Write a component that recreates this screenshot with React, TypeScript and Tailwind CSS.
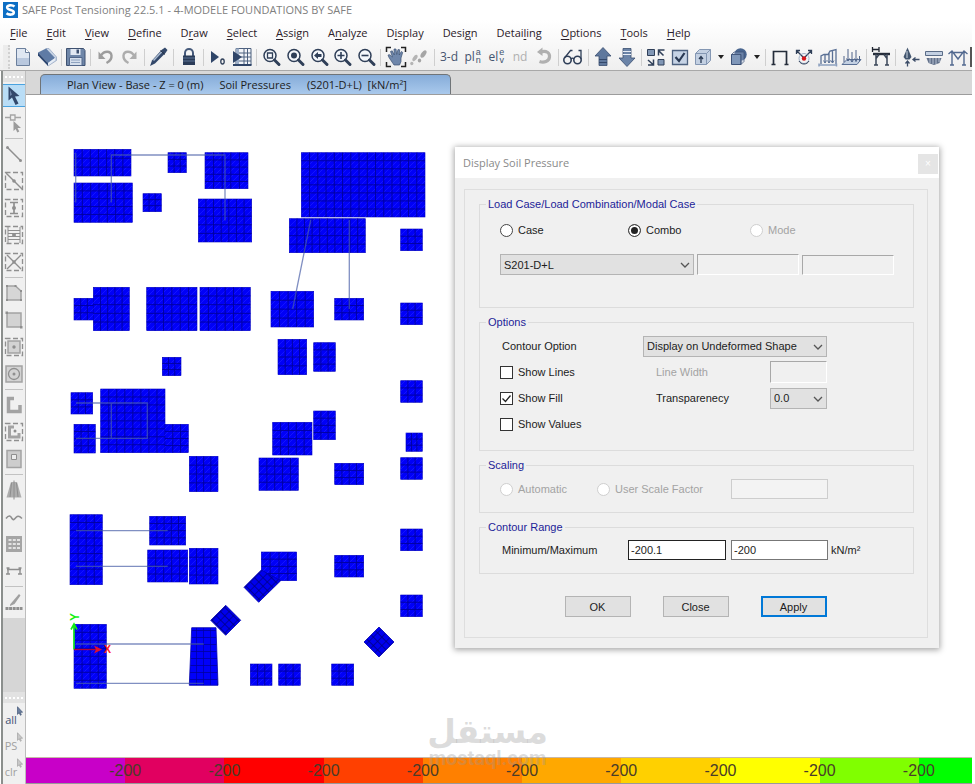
import React from 'react';

type Kids = { children?: React.ReactNode };

const NAVY = '#2f3f58';
const STEEL = '#8096b4';
const PALE = '#c3d0e2';
const GREY = '#8f8f8f';

function Glyph({ children }: Kids) {
  return (
    <svg viewBox="0 0 22 22" className="h-[22px] w-[22px] shrink-0" fill="none" aria-hidden="true">
      {children}
    </svg>
  );
}

function Magnifier({ children }: Kids) {
  return (
    <Glyph>
      <circle cx="10" cy="9.5" r="6" stroke={NAVY} strokeWidth="1.5" fill="#f4f7fb" />
      <path d="M14.5 14l4.500 4.500" stroke={NAVY} strokeWidth="3" strokeLinecap="round" />
      {children}
    </Glyph>
  );
}

type Tool = { label: string; icon: React.ReactNode } | 'sep' | 'drop';

const lettering = 'font-["Open_Sans",sans-serif] leading-none';

function StackedLabel({ lead, top, bottom }: { lead: string; top: string; bottom: string }) {
  return (
    <span className={`${lettering} flex items-center text-[12px] text-[#44546f]`}>
      {lead}
      <span className="ml-px flex flex-col font-['Liberation_Sans',sans-serif] text-[9px] leading-[9px]">
        <span className="h-[8px]">{top}</span>
        <span className="h-[10px]">{bottom}</span>
      </span>
    </span>
  );
}

const tools: Tool[] = [
  {
    label: 'New model',
    icon: (
      <Glyph>
        <path d="M4.500 2.500h9l4 4v13h-13z" fill="#dfe7f2" stroke="#6b7f9c" />
        <path d="M5 12h12v7H5z" fill="#b9c8de" />
        <path d="M13.500 2.500v4h4" fill="#fff" stroke="#6b7f9c" />
      </Glyph>
    ),
  },
  {
    label: 'Open',
    icon: (
      <Glyph>
        <path d="M10 2.500h3L20.500 11v3.500L12 20z" fill="#c9d5e6" stroke="#8fa2bf" strokeWidth=".7" />
        <path d="M2 6.500L10 2.500 19 12l-7 5z" fill="#5f7ba5" />
        <path d="M2 6.500l10 10.500v3L2 9.500z" fill="#2b4570" />
        <path d="M12 17l7-5v2.500l-7 5z" fill="#e6edf6" />
      </Glyph>
    ),
  },
  'sep',
  {
    label: 'Save',
    icon: (
      <Glyph>
        <path d="M1.500 2.500h17l1.500 2v15h-18.500z" fill="#6e86a8" stroke="#3e5170" />
        <path d="M5.500 3h10v6h-10z" fill="#e2e9f3" />
        <path d="M11.500 3.500h2.500v4h-2.500z" fill="#3e5170" />
        <path d="M4.500 11.500h12.500v8h-12.500z" fill="#d5dfec" stroke="#52678a" />
        <path d="M6 14h9M6 16.500h9" stroke="#8ea2bf" />
      </Glyph>
    ),
  },
  'sep',
  {
    label: 'Undo',
    icon: (
      <Glyph>
        <path d="M6 9.500c3-5 10-5 10.500 0 .3 3-2 6-5 7.500" stroke="#9d9d9d" strokeWidth="2.400" />
        <path d="M3.500 5.500v7.500h7z" fill="#9d9d9d" />
      </Glyph>
    ),
  },
  {
    label: 'Redo',
    icon: (
      <Glyph>
        <path d="M16 9.500c-3-5-10-5-10.500 0-.3 3 2 6 5 7.500" stroke="#adadad" strokeWidth="2.400" />
        <path d="M18.500 5.500v7.500h-7z" fill="#adadad" />
      </Glyph>
    ),
  },
  'sep',
  {
    label: 'Draw',
    icon: (
      <Glyph>
        <path d="M2 20l2-5.500L13.500 4l3.500-2.500 2.500 2.500L17.500 7 7 17.500z" fill="#33486a" />
        <path d="M5.500 14.500L14 5.500" stroke="#a9bad1" strokeWidth="1.500" />
        <path d="M12.500 4.500l4.500 4" stroke="#1e2b40" />
      </Glyph>
    ),
  },
  'sep',
  {
    label: 'Lock model',
    icon: (
      <Glyph>
        <path d="M7 10V7c0-5.500 8-5.500 8 0v3" stroke="#45597a" strokeWidth="2" />
        <path d="M5 9.500h12v9.500h-12z" fill="#2b3c58" />
        <path d="M5 12h12M5 15h12" stroke="#5d7294" />
      </Glyph>
    ),
  },
  'sep',
  {
    label: 'Run analysis',
    icon: (
      <Glyph>
        <path d="M4 5l8 6-8 6z" fill="#2f4568" />
        <ellipse cx="15.500" cy="15.500" rx="1.700" ry="2.500" stroke={NAVY} strokeWidth="1.300" />
      </Glyph>
    ),
  },
  {
    label: 'Mesh',
    icon: (
      <Glyph>
        <path d="M5 2.500h15v16.500H5z" fill="#f2f5f9" stroke="#4d607f" />
        <path d="M13 3v16M16.500 3v16M6 7h14M6 11h14M6 15h14" stroke="#4d607f" />
        <path d="M5 2.500h3v16.500H5z" fill="#9fb0c8" />
        <path d="M2 5l9 6-9 6z" fill="#2f4568" />
        <path d="M2 19h18.500" stroke="#2f4568" strokeWidth="2" />
      </Glyph>
    ),
  },
  'sep',
  { label: 'Rubber band zoom', icon: <Magnifier><path d="M7.500 7h5v5h-5z" stroke={NAVY} strokeWidth="1.300" /></Magnifier> },
  { label: 'Full view', icon: <Magnifier><circle cx="10" cy="9.500" r="3" fill={NAVY} /></Magnifier> },
  { label: 'Previous zoom', icon: <Magnifier><path d="M6 9.500l4-3.500v2h3.500v3H10v2z" fill={NAVY} /></Magnifier> },
  { label: 'Zoom in', icon: <Magnifier><path d="M10 6v7M6.500 9.500h7" stroke={NAVY} strokeWidth="1.600" /></Magnifier> },
  { label: 'Zoom out', icon: <Magnifier><path d="M6.500 9.500h7" stroke={NAVY} strokeWidth="1.600" /></Magnifier> },
  'sep',
  {
    label: 'Pan',
    icon: (
      <Glyph>
        <path d="M1.500 6V1.500H6M16 1.500h4.500V6M20.500 16v4.500H16M6 20.500H1.500V16" stroke="#222" strokeWidth="1.500" />
        <path d="M8 17.500L4 11.500 3 9l1.800-.3L7.500 11 5.500 5.500 7.200 4.800 9.300 9 9 3h2l.7 5.500L13 3.500l1.700.3L14.200 9 16.300 5.500l1.400.9L16 12v3.500L14.500 19H9z" fill="#6f87ab" stroke="#3c5172" strokeWidth=".7" />
      </Glyph>
    ),
  },
  {
    label: 'Walk',
    icon: (
      <Glyph>
        <ellipse cx="7" cy="12" rx="1.900" ry="3.600" transform="rotate(35 7 12)" fill="#b5b5b5" />
        <ellipse cx="3.800" cy="17.500" rx="1.600" ry="1.800" fill="#b5b5b5" />
        <ellipse cx="15.500" cy="8" rx="2.200" ry="4.200" transform="rotate(35 15.500 8)" fill="#a5a5a5" />
        <ellipse cx="11.500" cy="14.500" rx="1.700" ry="2" fill="#a5a5a5" />
      </Glyph>
    ),
  },
  'sep',
  { label: '3-d view', icon: <span className={`${lettering} text-[12px] text-[#44546f]`}>3-d</span> },
  { label: 'Plan view', icon: <StackedLabel lead="pl" top="a" bottom="n" /> },
  { label: 'Elevation view', icon: <StackedLabel lead="el" top="e" bottom="v" /> },
  { label: 'nd view', icon: <span className={`${lettering} text-[12px] text-[#b0b0b0]`}>nd</span> },
  {
    label: 'Rotate view',
    icon: (
      <Glyph>
        <path d="M7.500 6c6-2 9.500 1 9 5-.5 4.500-5.500 6-10 4.500" stroke="#b0b0b0" strokeWidth="3.200" />
        <path d="M9.500 1.500v8.500L4 6z" fill="#b0b0b0" />
      </Glyph>
    ),
  },
  'sep',
  {
    label: 'Perspective',
    icon: (
      <Glyph>
        <circle cx="5.500" cy="14" r="3.700" stroke={NAVY} strokeWidth="1.600" />
        <circle cx="15.500" cy="14" r="3.700" stroke={NAVY} strokeWidth="1.600" />
        <path d="M9 13c1-1.200 2-1.200 3 0M2.500 12L8.500 4.500h2M19 13V4.500h-2.500" stroke={NAVY} strokeWidth="1.300" />
      </Glyph>
    ),
  },
  'sep',
  {
    label: 'Move up',
    icon: (
      <Glyph>
        <path d="M11 1.500l8 8.500h-4v9.500H7V10H3z" fill="#5f789d" stroke="#3a4e70" strokeWidth=".8" />
        <path d="M7 13.500h8M7 16.500h8" stroke="#34486a" />
      </Glyph>
    ),
  },
  {
    label: 'Move down',
    icon: (
      <Glyph>
        <path d="M11 20.500L3 12h4V2.500h8V12h4z" fill="#6b84a8" stroke="#3a4e70" strokeWidth=".8" />
        <path d="M7 5.500h8M7 8.500h8" stroke="#e6ecf5" />
      </Glyph>
    ),
  },
  'sep',
  {
    label: 'Object shrink',
    icon: (
      <Glyph>
        <path d="M2.500 3.500h7v6h-7zM13 13.500h6v5.500h-6z" fill={STEEL} stroke={NAVY} />
        <path d="M3 19h5.500v-5.500M8 18.500l-5-4.500M19.500 4h-6v5.500M13.500 4.500l5 5" stroke={NAVY} strokeWidth="1.500" />
      </Glyph>
    ),
  },
  {
    label: 'Display options',
    icon: (
      <Glyph>
        <path d="M3.500 4.500h15v14h-15z" fill="#c6d3e5" stroke="#4d617f" strokeWidth="1.300" />
        <path d="M6.500 11l3.500 4 5.500-8" stroke="#2a3a54" strokeWidth="2.200" />
      </Glyph>
    ),
  },
  {
    label: 'Assignments',
    icon: (
      <Glyph>
        <path d="M3.500 7.500l4-4h11v11l-4 4h-11z" fill={PALE} stroke="#8497b3" />
        <path d="M3.500 7.500h11v11M14.500 7.500l4-4" stroke="#8497b3" />
        <path d="M9 17v-6M7 13L9 10.500l2 2.500" stroke="#2a3a54" strokeWidth="1.300" />
      </Glyph>
    ),
  },
  'drop',
  {
    label: 'Named views',
    icon: (
      <Glyph>
        <circle cx="12.500" cy="8.500" r="6.200" fill="#49658f" />
        <path d="M3.500 8.500h9.500v10h-9.500z" fill="#7f97b9" stroke="#3d5277" />
        <path d="M3.500 8.500L6 6h10v9.500l-3 3V8.500z" fill="#a5b8d3" fillOpacity=".35" stroke="#3d5277" strokeWidth=".7" />
      </Glyph>
    ),
  },
  'drop',
  'sep',
  {
    label: 'Undeformed shape',
    icon: (
      <Glyph>
        <path d="M4.500 18V5.500h13V18" stroke="#252d3a" strokeWidth="1.700" />
        <path d="M2.500 18.500h4M15.500 18.500h4" stroke="#252d3a" strokeWidth="1.500" />
      </Glyph>
    ),
  },
  {
    label: 'Joint reactions',
    icon: (
      <Glyph>
        <path d="M4 5l7 7 7-7M3.500 8V4.500H7M15 4.500h3.500V8" stroke={NAVY} strokeWidth="1.300" />
        <circle cx="11" cy="12.500" r="5" stroke="#9fb0c8" />
        <path d="M6 15c2 4 8 4 10 0" stroke={NAVY} />
        <circle cx="11" cy="12.500" r="2.200" fill="#d8171b" />
      </Glyph>
    ),
  },
  {
    label: 'Frame forces',
    icon: (
      <Glyph>
        <path d="M4 18V10l3-1.500h4L13 5l6-1.500V18M8 17V8.500M12 17V6.500M15.500 17V4.500" stroke="#5a7095" strokeWidth="1.300" />
        <path d="M6.500 14.500L8 17l1.500-2.500M10.500 14.500L12 17l1.500-2.500M14 14.500l1.500 2.500 1.500-2.500" stroke="#5a7095" />
        <path d="M1.500 19h18.500M2 17.500v3M19.500 17.500v3" stroke="#8ca0bf" strokeWidth="1.500" />
      </Glyph>
    ),
  },
  {
    label: 'Shell forces',
    icon: (
      <Glyph>
        <path d="M2 18.500l5-5h14l-4 5z" fill={PALE} stroke="#5a7095" />
        <path d="M4 10v6M8 3v12M12 6v10M16 4v12M19.500 10v5M6.500 12.500L8 15l1.500-2.500M10.500 13.500L12 16l1.500-2.500M14.500 12.500L16 15l1.500-2.500" stroke="#50658a" />
      </Glyph>
    ),
  },
  'sep',
  {
    label: 'Frame design',
    icon: (
      <Glyph>
        <path d="M2.500 1v5M9 1v5M2.500 3.500H9" stroke="#1f2530" strokeWidth="1.300" />
        <path d="M3 8h17" stroke="#252d3a" strokeWidth="2.400" />
        <path d="M6 8v11M17 8v11M4 19h4M15 19h4M6 12.500l3-4M17 12.500l-3-4" stroke="#3a4658" strokeWidth="1.500" />
      </Glyph>
    ),
  },
  'sep',
  {
    label: 'Soil',
    icon: (
      <Glyph>
        <path d="M7.500 1.500l4 9.500-2 2.500h-4l-2-2.500z" fill="#43566f" />
        <path d="M7 5v7" stroke="#cfd8e4" />
        <path d="M7.500 20.500v-5M5.500 17.500l2-2.500 2 2.500M19.500 13.500h-6.500M15.500 11.500l-2.500 2 2.500 2" stroke="#3c4d68" strokeWidth="1.300" />
      </Glyph>
    ),
  },
  {
    label: 'Strip forces',
    icon: (
      <Glyph>
        <path d="M2.500 5.500h17v4h-17z" fill={PALE} stroke="#5a6c87" />
        <path d="M3.500 12h15l-2 5-5.500 2-5.500-2z" fill="#62718a" />
        <path d="M7 12v5M10 12v6M13 12v6M16 12v4" stroke="#b8c3d4" />
      </Glyph>
    ),
  },
  {
    label: 'Tendon profile',
    icon: (
      <Glyph>
        <path d="M5 18.500V6M17 18.500V6M3 19h4M15 19h4M1.500 8L5 5l6 8 6-8 3.500 3M5 6.500h12" stroke="#536a90" strokeWidth="1.400" />
      </Glyph>
    ),
  },
];

const menus: [string, string, string][] = [
  ['', 'F', 'ile'],
  ['', 'E', 'dit'],
  ['', 'V', 'iew'],
  ['', 'D', 'efine'],
  ['D', 'r', 'aw'],
  ['', 'S', 'elect'],
  ['', 'A', 'ssign'],
  ['A', 'n', 'alyze'],
  ['D', 'i', 'splay'],
  ['Desi', 'g', 'n'],
  ['Detai', 'l', 'ing'],
  ['', 'O', 'ptions'],
  ['', 'T', 'ools'],
  ['', 'H', 'elp'],
];

function MenuBar() {
  return (
    <nav className="flex h-[24px] items-center gap-[19px] overflow-hidden bg-gradient-to-b from-white to-[#f8f8f8] pt-[2px] pl-[10px] text-[11px] text-[#2b2028]">
      {menus.map(([a, key, b]) => (
        <button key={a + key + b} type="button" className="whitespace-nowrap leading-[16px]">
          {a}
          <span className="underline underline-offset-2">{key}</span>
          {b}
        </button>
      ))}
    </nav>
  );
}

function Toolbar() {
  return (
    <div role="toolbar" className="flex h-[27px] items-center overflow-hidden border-b border-[#a8a8a8] bg-gradient-to-b from-[#f8f8f8] to-[#efefef] pl-[3px]">
      <div className="mr-[1px] h-[24px] w-[7px] shrink-0 border-r-2 border-dotted border-[#d0d0d0] bg-[#ececec]" />
      {tools.map((t, i) => {
        if (t === 'sep') {
          return (
            <div key={i} className="flex flex-[6] justify-center">
              <div className="h-[17px] w-px bg-[#cfcfcf]" />
            </div>
          );
        }
        if (t === 'drop') {
          return (
            <button key={i} type="button" aria-label="More" className="flex flex-[12] justify-center">
              <svg viewBox="0 0 6 4" className="h-[4px] w-[6px]" aria-hidden="true">
                <path d="M0 0h6L3 4z" fill="#222" />
              </svg>
            </button>
          );
        }
        return (
          <button key={i} type="button" aria-label={t.label} className="flex h-[24px] min-w-0 flex-[24] items-center justify-center">
            {t.icon}
          </button>
        );
      })}
      <div className="h-[20px] w-[2px] shrink-0 bg-[#555]" />
    </div>
  );
}

function DashFrame() {
  return <path d="M2.500 2.500h17v17h-17z" stroke={GREY} strokeWidth="1.300" strokeDasharray="5 2.500" />;
}

const sideTools: Tool[] = [
  {
    label: 'Reshape',
    icon: (
      <Glyph>
        <path d="M2 5.500h5.500M12 5.500h6M7.500 3h4.500v5H7.500z" stroke="#a5a5a5" strokeWidth="1.300" />
        <path d="M10.500 9v10l2.200-2 1.600 3.500 2-1-1.800-3.500h3.500z" fill="#9b9b9b" />
      </Glyph>
    ),
  },
  'sep',
  {
    label: 'Draw line',
    icon: (
      <Glyph>
        <path d="M4.500 4.500l13 13" stroke={GREY} strokeWidth="1.500" />
        <circle cx="4.500" cy="4.500" r="1.500" fill={GREY} />
        <circle cx="17.500" cy="17.500" r="1.500" fill={GREY} />
      </Glyph>
    ),
  },
  { label: 'Quick line', icon: <Glyph><DashFrame /><path d="M3 3l16 16" stroke={GREY} strokeWidth="1.500" /><circle cx="11" cy="11" r="1.800" fill={GREY} /></Glyph> },
  { label: 'Quick column', icon: <Glyph><DashFrame /><path d="M7 5.500h8M7 16.500h8M11 5.500v11" stroke={GREY} strokeWidth="1.700" /><circle cx="11" cy="11" r="2" fill={GREY} /></Glyph> },
  { label: 'Quick secondary beams', icon: <Glyph><DashFrame /><path d="M5 3v16M17 3v16M5 6.500h12M5 9.500h12M5 12.500h12M5 15.500h12" stroke={GREY} /><circle cx="11" cy="11" r="2" fill={GREY} /></Glyph> },
  { label: 'Quick braces', icon: <Glyph><DashFrame /><path d="M4 4l14 14M18 4L4 18" stroke={GREY} strokeWidth="1.400" /><circle cx="11" cy="11" r="1.700" fill={GREY} /></Glyph> },
  'sep',
  { label: 'Draw slab', icon: <Glyph><path d="M4 4h8.500L18 9v9H4z" fill="#d6d6d6" stroke="#a3a3a3" strokeWidth="1.500" /><path d="M3 3h2v2H3zM3 17h2v2H3zM17 17h2v2h-2zM17 8h2v2h-2zM11.500 3h2v2h-2z" fill={GREY} /></Glyph> },
  { label: 'Draw rectangular slab', icon: <Glyph><path d="M4 4h14v14H4z" fill="#d3d3d3" stroke="#a3a3a3" strokeWidth="1.500" /><path d="M2.500 2.500h2.500v2.500H2.500zM17 17h2.500v2.500H17z" fill={GREY} /></Glyph> },
  { label: 'Quick slab', icon: <Glyph><DashFrame /><path d="M5 5h12v12H5z" fill="#d3d3d3" stroke="#a3a3a3" strokeWidth="1.500" /><circle cx="11" cy="11" r="1.700" fill={GREY} /></Glyph> },
  { label: 'Circular slab', icon: <Glyph><path d="M3 3h16v16H3z" fill="#d3d3d3" stroke="#a3a3a3" strokeWidth="1.500" /><circle cx="11" cy="11" r="5.500" stroke={GREY} strokeWidth="1.300" /><circle cx="11" cy="11" r="1.500" fill={GREY} /></Glyph> },
  'sep',
  { label: 'Draw walls', icon: <Glyph><path d="M11 4.500H5.500v13H17V11" stroke="#a3a3a3" strokeWidth="3.500" /></Glyph> },
  { label: 'Quick walls', icon: <Glyph><DashFrame /><path d="M11 6H6.500v10H16v-4" stroke="#a3a3a3" strokeWidth="3" /><circle cx="12" cy="10" r="1.500" fill={GREY} /></Glyph> },
  { label: 'Draw opening', icon: <Glyph><path d="M4 2.500h14v17H4z" fill="#cdcdcd" stroke="#a3a3a3" strokeWidth="1.500" /><path d="M8.500 6.500h5v5h-5z" fill="#ececec" stroke={GREY} /></Glyph> },
  'sep',
  { label: 'Draw support', icon: <Glyph><path d="M8 3h6l4.500 15.500h-15z" fill="#adadad" /><path d="M11 1.500v19M8.500 4L7 18M13.500 4L15 18" stroke="#8e8e8e" /></Glyph> },
  { label: 'Draw tendon', icon: <Glyph><path d="M3 12.500c3-4 4.500-2.500 6 0s3 0 4.500-1.500 3-1 5.500 1.500" stroke={GREY} strokeWidth="1.600" /></Glyph> },
  { label: 'Draw grid', icon: <Glyph><path d="M3 3h16v16H3z" fill="#a5a5a5" /><path d="M5.500 6h3v2h-3zM9.800 6h3v2h-3zM14 6h3v2h-3zM5.500 10h3v2h-3zM9.800 10h3v2h-3zM14 10h3v2h-3zM5.500 14h3v2h-3zM9.800 14h3v2h-3zM14 14h3v2h-3z" fill="#e3e3e3" /></Glyph> },
  { label: 'Draw dimension', icon: <Glyph><path d="M4 9.500h14M5 8v6M17 8v6M3 14h4M15 14h4M3.500 8h3M15.500 8h3" stroke={GREY} strokeWidth="1.400" /></Glyph> },
  'sep',
  { label: 'Draw strips', icon: <Glyph><path d="M7 13.500L16 3l1.500 1.500-6 8.500-4.500 2z" fill="#a0a0a0" /><path d="M2.500 17.500h17" stroke={GREY} strokeWidth="3" strokeDasharray="3 .6" /></Glyph> },
];

function SelectGlyph({ text, dark }: { text: string; dark?: boolean }) {
  return (
    <span className={`flex items-center text-[11px] ${dark ? 'text-[#3f5374]' : 'text-[#a0a0a0]'}`}>
      <span className="pt-[6px] leading-none">{text}</span>
      <svg viewBox="0 0 7 12" className="mb-[10px] h-[12px] w-[6px] shrink-0" aria-hidden="true">
        <path d="M.5 1v9l2-2 1.500 3 1-.5L3.800 7.500h2.700z" fill={dark ? '#6c7f9f' : '#c8c8c8'} stroke="currentColor" strokeWidth=".8" />
      </svg>
    </span>
  );
}

function Grip() {
  return (
    <div className="flex h-[11px] shrink-0 items-center bg-[#e2e2e2] px-[2px]">
      <div className="w-full border-t-2 border-dotted border-white" />
    </div>
  );
}

function SideBar() {
  return (
    <aside className="ml-[1px] flex w-[25px] shrink-0 flex-col overflow-hidden border-r border-l-2 border-l-[#8b8f8d] border-r-[#bdbdbd] bg-[#f0f0f0]">
      <Grip />
      <button type="button" aria-label="Select" className="flex h-[27px] shrink-0 items-center justify-center">
        <span className="flex h-[23px] w-full items-center justify-center border-y border-[#4aa3e0] bg-[#b9ddf6]">
          <Glyph>
            <path d="M5.500 1.500v14l3.500-3 3.500 7.500 3-1.500-3.500-7 4.500-.5z" fill="#32486c" />
            <path d="M7 5v6l2-1.500z" fill="#6f87ab" />
          </Glyph>
        </span>
      </button>
      {sideTools.map((t, i) =>
        typeof t === 'string' ? (
          <div key={i} className="flex h-[4px] shrink-0 items-center px-[2px]">
            <div className="h-px w-full bg-[#c2c2c2]" />
          </div>
        ) : (
          <button key={i} type="button" aria-label={t.label} className="flex h-[27px] shrink-0 items-center justify-center">
            {t.icon}
          </button>
        ),
      )}
      <div className="mt-[3px] flex-1 bg-[#d6d6d6]" />
      <Grip />
      <div className="flex shrink-0 flex-col pb-[3px]">
        <button type="button" aria-label="Select all" className="flex h-[26px] items-center justify-center"><SelectGlyph text="all" dark /></button>
        <button type="button" aria-label="Previous selection" className="flex h-[26px] items-center justify-center"><SelectGlyph text="PS" /></button>
        <button type="button" aria-label="Clear selection" className="flex h-[26px] items-center justify-center"><SelectGlyph text="clr" /></button>
      </div>
    </aside>
  );
}

// Footings as left, top, right, bottom in model view units.
const footings: [number, number, number, number][] = [
  [74, 149.3, 131, 176], [74, 183, 132.3, 222.3], [168, 152.7, 186.3, 172.7], [143, 193.7, 161.3, 211.7],
  [205, 152.7, 248, 188.7], [198.3, 199, 251.7, 242], [74, 298.3, 94, 320], [93.3, 287.3, 129.3, 330.7],
  [146.7, 287.3, 197, 330.7], [200, 287.3, 250.3, 330.7], [162.3, 357.3, 181, 375.7], [301.3, 152.7, 425, 217],
  [289.3, 218.7, 365.3, 252.7], [400.7, 229, 422.3, 250.7], [271, 291.3, 313.7, 327], [334.7, 298.3, 363.7, 320],
  [400.7, 303, 422.3, 324.7], [278, 339.3, 306.7, 374.7], [313.7, 342.7, 335.3, 371.3], [71, 392.7, 92.7, 414],
  [74, 424.3, 95.3, 453], [100.7, 389, 165, 452.7], [165, 424.3, 188.3, 452.7], [189.3, 456.3, 218, 491.7],
  [70, 514.7, 102.3, 584.7], [149.7, 516.3, 185.7, 545], [147.7, 550, 187.7, 582], [189.3, 548.3, 218, 584],
  [74, 624.3, 106.3, 688.3], [400.7, 380.7, 422.3, 402.3], [272.7, 422.3, 312, 455], [313.7, 411, 335.3, 439.7],
  [406, 433, 422.3, 451.3], [400.7, 457.7, 422.3, 479.3], [259, 458, 298.3, 490.3], [334.7, 463.3, 363.7, 484.7],
  [400.7, 529, 422.3, 550.7], [261.3, 552, 296.7, 580.7], [334.7, 555.3, 363.7, 577], [400.7, 595, 422.3, 616.7],
  [250.3, 664, 272, 685.3], [278.7, 664, 300.3, 685.3], [331.7, 664, 353.7, 685.3],
];

const skewed = [
  '191.7,627.7 216,627.7 218,685.3 189.3,685.3',
  '225.7,605.3 240.7,620.3 225.7,635.3 210.7,620.3',
  '379,627 394,642 379,657 364,642',
  '261.3,570 244,587.3 258.7,602.3 280.7,580.7',
];

const beams =
  'M75.700 153V202.500M111.300 202.500V155H225V220.500M310.700 220L292.700 309M349.300 220V309M76 403H147.300V438.300H76M111.300 403V438.300M76 530.700H167.700M76 566.300H167.700M76 644H203.700M76 683.300H203.700';

function meshLines([l, t, r, b]: [number, number, number, number]) {
  const w = r - l;
  const h = b - t;
  const nx = Math.max(3, Math.round(w / 8));
  const ny = Math.max(3, Math.round(h / 8));
  let d = '';
  for (let i = 1; i < nx; i++) d += `M${l + (w * i) / nx} ${t}v${h}`;
  for (let j = 1; j < ny; j++) d += `M${l} ${t + (h * j) / ny}h${w}`;
  return d;
}

function PlanDrawing() {
  return (
    <svg viewBox="26 95 420 620" className="block h-[620px] w-[420px] shrink-0" role="img" aria-label="Foundation plan with soil pressure contours">
      <defs>
        <pattern id="cells" width="7" height="7" patternUnits="userSpaceOnUse">
          <path d="M0 0H7V7H0z" fill="#0000fa" />
          <path d="M0 0H7M0 0V7" stroke="#000098" strokeWidth="1.300" />
        </pattern>
        <pattern id="tilted" width="6" height="6" patternUnits="userSpaceOnUse" patternTransform="rotate(45)">
          <path d="M0 0H6V6H0z" fill="#0000ee" />
          <path d="M0 0H6M0 0V6" stroke="#00007c" strokeWidth="1.300" />
        </pattern>
        <pattern id="diagonal" width="6" height="6" patternUnits="userSpaceOnUse">
          <path d="M0 6L6 0" stroke="#1414ff" strokeWidth="1" />
        </pattern>
      </defs>
      {footings.map((f, i) => (
        <g key={i}>
          <rect x={f[0]} y={f[1]} width={f[2] - f[0]} height={f[3] - f[1]} fill="#0000f8" stroke="#0000b8" strokeWidth=".6" />
          <rect x={f[0]} y={f[1]} width={f[2] - f[0]} height={f[3] - f[1]} fill="url(#diagonal)" />
          <path d={meshLines(f)} stroke="#00009c" strokeWidth=".9" />
        </g>
      ))}
      {skewed.map((p, i) => (
        <polygon key={p} points={p} fill={i === 0 ? 'url(#cells)' : 'url(#tilted)'} stroke="#0000b0" strokeWidth=".8" />
      ))}
      <path d={beams} fill="none" stroke="#4a5fa8" strokeOpacity=".7" strokeWidth="1.300" />
      <path d="M74 649.500V625M71 629.500l3-5.500 3 5.500" fill="none" stroke="#10f010" strokeWidth="1.600" />
      <path d="M74 649.500H96" stroke="#b00040" strokeWidth="1.300" />
      <path d="M94 645.500l8 4-8 4 2-4z" fill="#e01030" />
      <text x="107.500" y="653" textAnchor="middle" fontSize="11" fontWeight="700" fill="#ff2020" fontFamily="Liberation Sans, sans-serif">X</text>
      <text x="75" y="617" textAnchor="middle" dominantBaseline="central" transform="rotate(-90 75 617)" fontSize="12" fontWeight="700" fill="#10f010" fontFamily="Liberation Sans, sans-serif">Y</text>
    </svg>
  );
}

function Group({ title, children }: Kids & { title: string }) {
  return (
    <fieldset className="min-w-0 border border-[#dcdcdc] pl-[20px]">
      <legend className="-ml-[14px] px-[2px] leading-[16px] text-[#1d1d98]">{title}</legend>
      {children}
    </fieldset>
  );
}

function Radio({ name, label, checked, disabled }: { name: string; label: string; checked?: boolean; disabled?: boolean }) {
  return (
    <label className={`flex items-center gap-[5px] whitespace-nowrap ${disabled ? 'text-[#a3a3a3]' : ''}`}>
      <input
        type="radio"
        name={name}
        defaultChecked={checked}
        disabled={disabled}
        className="h-[13px] w-[13px] shrink-0 appearance-none rounded-full border border-[#444] bg-white checked:bg-[#222] checked:shadow-[inset_0_0_0_2px_white] disabled:border-[#cfcfcf]"
      />
      {label}
    </label>
  );
}

function Check({ label, checked }: { label: string; checked?: boolean }) {
  return (
    <label className="flex w-[156px] items-center gap-[5px]">
      <span className="relative h-[13px] w-[13px]">
        <input type="checkbox" defaultChecked={checked} className="peer block h-[13px] w-[13px] appearance-none border border-[#333] bg-white" />
        <svg viewBox="0 0 13 13" className="pointer-events-none absolute inset-0 hidden peer-checked:block" fill="none" aria-hidden="true">
          <path d="M2.500 6.500l3 3 5-6" stroke="#222" strokeWidth="1.300" />
        </svg>
      </span>
      {label}
    </label>
  );
}

function Picker({ id, label, value, width }: { id: string; label?: string; value: string; width: string }) {
  return (
    <span className={`relative ${width}`}>
      <select id={id} aria-label={label} defaultValue={value} className="block h-[21px] w-full appearance-none border border-[#b4b4b4] bg-[#e1e1e1] pl-[3px] text-[#1c1c1c]">
        <option>{value}</option>
      </select>
      <svg viewBox="0 0 10 6" className="pointer-events-none absolute top-[8px] right-[4px] h-[6px] w-[10px]" fill="none" aria-hidden="true">
        <path d="M1 1l4 4 4-4" stroke="#555" strokeWidth="1.300" />
      </svg>
    </span>
  );
}

const sunken = 'border border-t-[#a8a8a8] border-l-[#a8a8a8] border-r-white border-b-white bg-[#f0f0f0]';

function SoilPressureDialog() {
  return (
    <section
      role="dialog"
      aria-labelledby="dialog-title"
      className="absolute top-[52px] left-[429px] w-[484px] bg-[#f0f0f0] font-['Liberation_Sans',Arial,sans-serif] text-[11px] leading-[16px] text-[#1c1c1c] shadow-[0_1px_6px_1px_rgba(0,0,0,0.35)]"
    >
      <header className="flex h-[31px] items-center justify-between bg-white pr-[1px] pl-[8px]">
        <h2 id="dialog-title" className="font-['Open_Sans','Noto_Sans',sans-serif] text-[11px] text-[#8a8a8a]">Display Soil Pressure</h2>
        <button type="button" aria-label="Close dialog" className="mt-[3px] flex h-[20px] w-[20px] items-center justify-center bg-[#e5e5e5] text-[10px] text-white">×</button>
      </header>
      <div className="pt-[11px] pr-[11px] pb-[10px] pl-[9px]">
        <form className="flex flex-col gap-[6px] border border-[#dedede] pt-[6px] pr-[13px] pb-[20px] pl-[14px]" onSubmit={(e) => e.preventDefault()}>
          <Group title="Load Case/Load Combination/Modal Case">
            <div className="flex h-[26px] items-center pt-[10px]">
              <div className="w-[128px]"><Radio name="source" label="Case" /></div>
              <div className="w-[122px]"><Radio name="source" label="Combo" checked /></div>
              <Radio name="source" label="Mode" disabled />
            </div>
            <div className="mt-[16px] mb-[32px] flex items-end gap-[3px]">
              <Picker id="combo" label="Load combination" value="S201-D+L" width="w-[194px]" />
              <input aria-label="Step type" disabled className={`h-[21px] w-[102px] ${sunken}`} />
              <input aria-label="Step number" disabled className={`h-[20px] w-[92px] ${sunken}`} />
            </div>
          </Group>
          <Group title="Options">
            <div className="pt-[3px] pb-[13px]">
              <div className="flex h-[26px] items-center pl-[2px]">
                <label htmlFor="contour" className="w-[141px]">Contour Option</label>
                <Picker id="contour" value="Display on Undeformed Shape" width="w-[184px]" />
              </div>
              <div className="flex h-[26px] items-center">
                <Check label="Show Lines" />
                <label htmlFor="line-width" className="w-[114px] text-[#a3a3a3]">Line Width</label>
                <input id="line-width" disabled className={`h-[22px] w-[57px] ${sunken}`} />
              </div>
              <div className="flex h-[26px] items-center">
                <Check label="Show Fill" checked />
                <label htmlFor="transparency" className="w-[114px]">Transparenecy</label>
                <Picker id="transparency" value="0.0" width="w-[57px]" />
              </div>
              <div className="flex h-[26px] items-center">
                <Check label="Show Values" />
              </div>
            </div>
          </Group>
          <Group title="Scaling">
            <div className="mt-[6px] mb-[13px] flex h-[20px] items-center">
              <div className="w-[97px]"><Radio name="scaling" label="Automatic" disabled /></div>
              <div className="w-[134px]"><Radio name="scaling" label="User Scale Factor" disabled /></div>
              <input aria-label="Scale factor" disabled className="h-[20px] w-[97px] border border-[#cdcdcd] bg-[#f3f3f3]" />
            </div>
          </Group>
          <Group title="Contour Range">
            <div className="mt-[5px] mb-[13px] flex h-[20px] items-center pl-[2px]">
              <label htmlFor="minimum" className="w-[126px]">Minimum/Maximum</label>
              <input id="minimum" defaultValue="-200.1" className="mr-[5px] h-[20px] w-[98px] border border-[#222] bg-white px-[2px]" />
              <input aria-label="Maximum" defaultValue="-200" className="mr-[3px] h-[20px] w-[97px] border border-[#777] bg-white px-[2px]" />
              <span>kN/m²</span>
            </div>
          </Group>
          <div className="mt-[16px] flex justify-center gap-[32px] pr-[2px]">
            <button type="button" className="h-[21px] w-[66px] border border-[#b4b4b4] bg-[#e1e1e1]">OK</button>
            <button type="button" className="h-[21px] w-[66px] border border-[#b4b4b4] bg-[#e1e1e1]">Close</button>
            <button type="submit" className="h-[21px] w-[66px] border-2 border-[#0078d7] bg-[#e1e1e1]">Apply</button>
          </div>
        </form>
      </div>
    </section>
  );
}

const bands = ['bg-[#c800c8]', 'bg-[#e10060]', 'bg-[#ff0000]', 'bg-[#ff4000]', 'bg-[#ff8000]', 'bg-[#ffa800]', 'bg-[#ffd000]', 'bg-[#ffff00]', 'bg-[#80ff00]'];

function ContourLegend() {
  return (
    <div className="flex h-[27px] shrink-0 overflow-hidden border-t border-b border-t-[#c8b8a8] border-b-[#999]">
      {bands.map((band) => (
        <div key={band} className={`relative flex-[99] ${band}`}>
          <span className="absolute top-[4px] right-0 z-10 translate-x-1/2 font-['Liberation_Sans',Arial,sans-serif] text-[16px] leading-[18px] text-[#4a3c28]">-200</span>
        </div>
      ))}
      <div className="flex-[53] bg-[#00ff00]" />
    </div>
  );
}

function Watermark() {
  return (
    <div className="pointer-events-none absolute bottom-[19px] left-[403px] z-20 flex w-[117px] flex-col items-center font-bold text-[#9a9a9a]/35">
      <span lang="ar" dir="rtl" className="font-['DejaVu_Sans',sans-serif] text-[33px] leading-[38px]">مستقل</span>
      <span className="font-['Roboto',sans-serif] text-[20px] leading-[14px]">mostaql.com</span>
    </div>
  );
}

export default function App() {
  return (
    <div className="flex h-screen flex-col overflow-hidden bg-white pr-[3px] font-['Open_Sans','Noto_Sans',sans-serif]">
      <header className="flex h-[20px] shrink-0 items-center gap-[4px] pl-[3px]">
        <svg viewBox="0 0 15 16" className="h-[16px] w-[15px]" aria-hidden="true">
          <rect width="15" height="16" fill="#0e6fc4" />
          <path d="M11.500 4.500C9 2.500 4 3 4.200 5.700 4.500 8.500 10.800 7.500 10.800 10.300 10.800 13 6 13.300 3.500 11.300" fill="none" stroke="#fff" strokeWidth="2.600" />
        </svg>
        <h1 className="text-[11px] leading-[16px] whitespace-nowrap text-[#808080]">SAFE Post Tensioning 22.5.1 - 4-MODELE FOUNDATIONS BY SAFE</h1>
      </header>
      <div className="shrink-0">
        <MenuBar />
        <Toolbar />
      </div>
      <div className="flex min-h-0 flex-1">
        <SideBar />
        <main className="relative flex min-w-0 flex-1 flex-col">
          <div className="flex h-[24px] shrink-0 items-end border-b border-[#9c9c9c] bg-[#d8d8d8] pl-[14px]">
            <h2 className="flex h-[20px] w-[411px] gap-[16px] rounded-t-[5px] border border-b-0 border-[#6f7478] bg-gradient-to-b from-[#86acd9] to-[#a9c9ec] pl-[26px] text-[11px] leading-[19px] whitespace-pre text-[#1d1d22]">
              <span>Plan View - Base - Z = 0 (m)</span>
              <span>Soil Pressures</span>
              <span>{'(S201-D+L)  [kN/m²]'}</span>
            </h2>
          </div>
          <div className="relative min-h-0 flex-1 bg-white">
            <div className="h-full overflow-hidden">
              <PlanDrawing />
            </div>
            <SoilPressureDialog />
          </div>
          <ContourLegend />
          <Watermark />
        </main>
      </div>
    </div>
  );
}
